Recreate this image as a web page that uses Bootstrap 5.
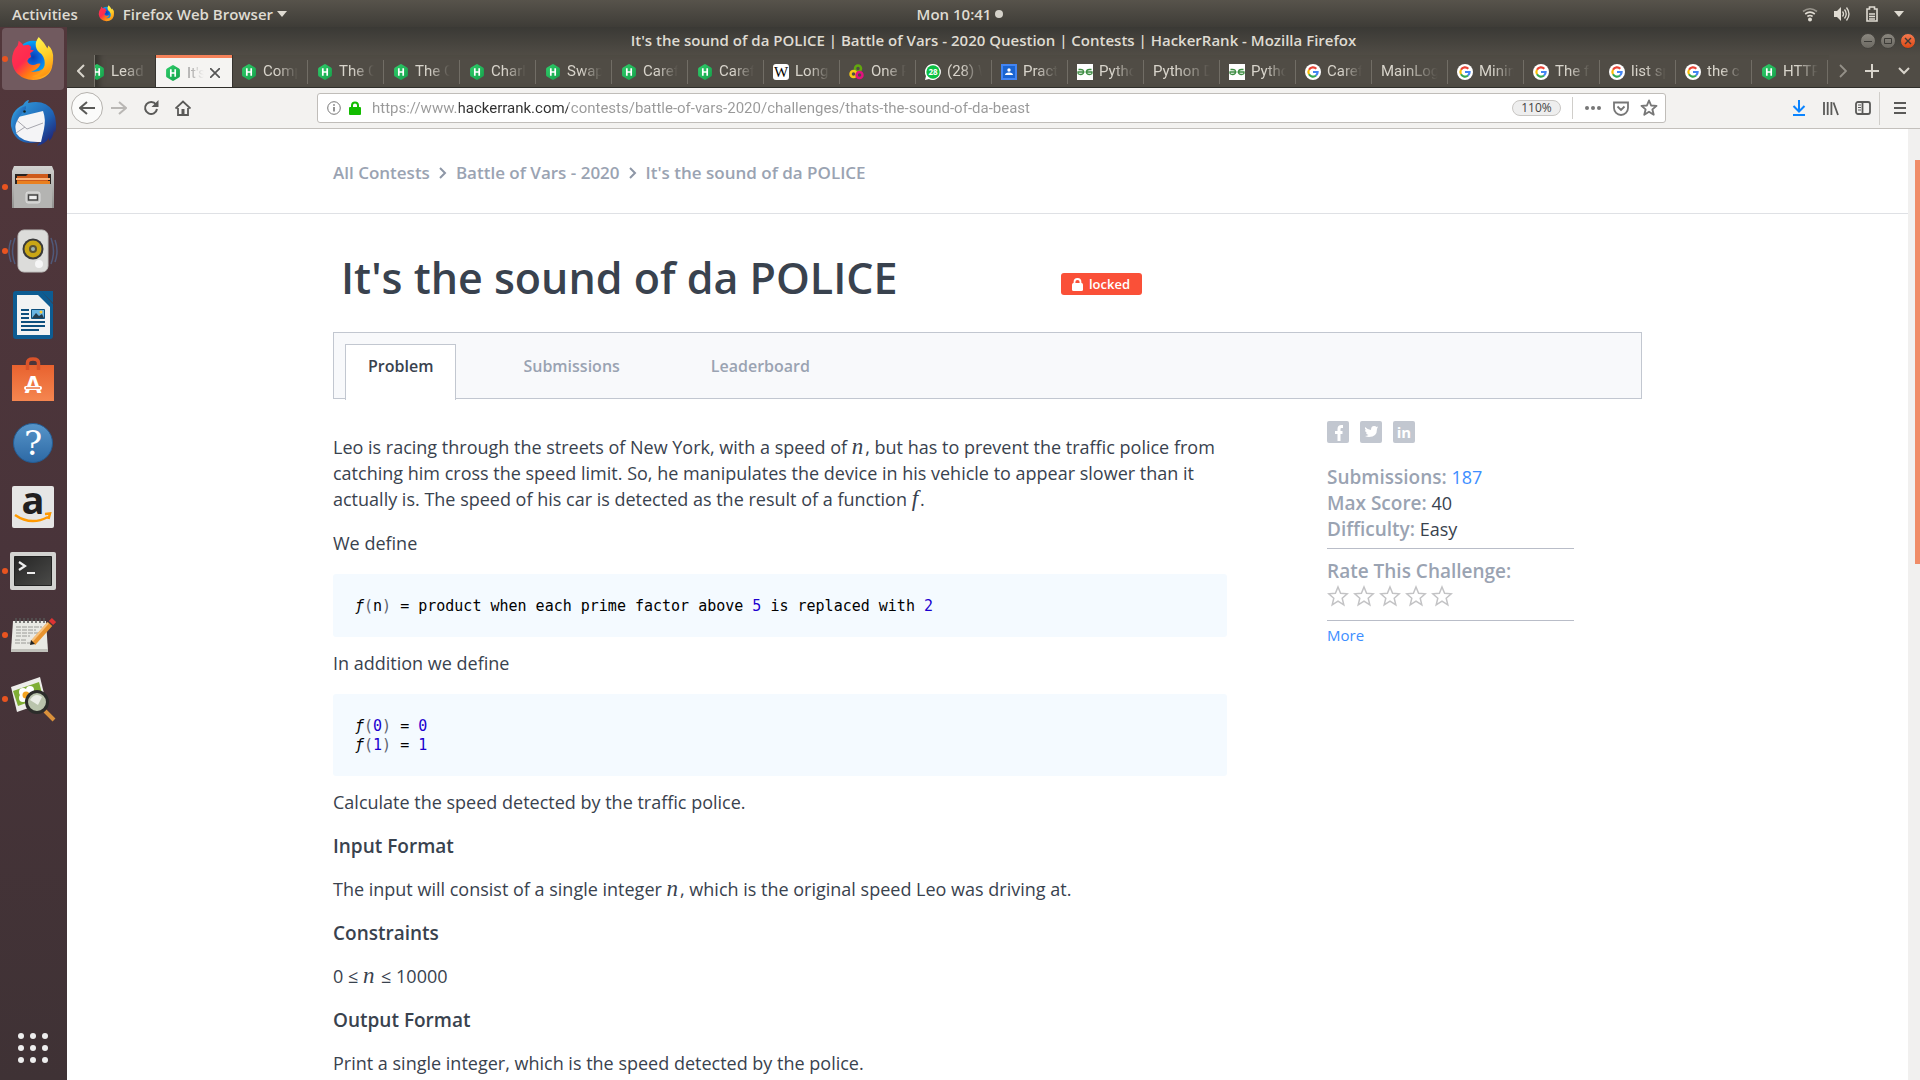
<!DOCTYPE html>
<html lang="en">
<head>
<meta charset="utf-8">
<meta name="viewport" content="width=device-width, initial-scale=1">
<title>It's the sound of da POLICE | Battle of Vars - 2020 Question | Contests | HackerRank</title>
<link href="https://cdn.jsdelivr.net/npm/bootstrap@5.3.0/dist/css/bootstrap.min.css" rel="stylesheet">
<style>
body{font-family:"Open Sans","Noto Sans",sans-serif;color:#39424e;background:#fff}
button{border:0;background:none;padding:0;color:inherit;font:inherit}
a{text-decoration:none}
svg{display:block;flex:none}
/* desktop top bar */
.topbar,.titlebar,.tabstrip,.toolbar{flex:none}
.topbar{height:27px;background:linear-gradient(#57534b,#3e3c37);color:#dfdbd2;font-size:15px;font-weight:600;line-height:26px;display:grid;grid-template-columns:1fr auto 1fr}
.topbar .dot{width:8px;height:8px;border-radius:50%;background:#d5d2ca}
/* dock */
.dock{width:67px;background:linear-gradient(#52373b,#49343a 50%,#3f3235)}
.dock-item{height:64px;width:67px;padding-right:2px;display:flex;align-items:center;justify-content:center;position:relative}
.dock-item.current::before{content:"";position:absolute;left:2px;right:3px;top:1px;bottom:1px;border-radius:4px;background:#715a5f}
.dock-item svg{position:relative}
.dock-item.running::after{content:"";position:absolute;left:2px;top:29px;width:6px;height:6px;border-radius:50%;background:#e95420}
/* window frame */
.titlebar{height:28px;background:linear-gradient(#3a3935,#504c45);color:#dfdbd2;font-size:15px;font-weight:600;line-height:27px;display:grid;grid-template-columns:1fr auto 1fr}
.win-btn{width:16px;height:16px;border-radius:50%;background:linear-gradient(#8a877f,#6c6962);color:#3c3b37;border:1px solid #45433e;display:grid;place-items:center}
.win-btn.close-win{background:linear-gradient(#f5794f,#dd4814)}
.tabstrip{height:33px;background:#504c45;color:#d8d4cb;border-bottom:1px solid #2f2e2a}
.tab-nav{width:32px;display:grid;place-items:center}
.tab-nav.edge{width:27px}
.tab-view{font-family:Roboto,"Open Sans",sans-serif;font-size:15px;border-left:1px solid #78746c;box-shadow:inset 8px 0 6px -4px #34322d}
.btab{width:76px;height:33px;flex:none;padding:0 10px 0 9px;gap:6px;display:flex;align-items:center;position:relative;color:#d8d4cb}
.btab:first-child{margin-left:-15px}
.btab::after{content:"";position:absolute;right:0;top:5px;height:24px;width:1px;background:#716d65}
.btab.no-sep::after{display:none}
.btab span{overflow:hidden;white-space:nowrap;flex:1;-webkit-mask-image:linear-gradient(90deg,#000 40%,transparent);mask-image:linear-gradient(90deg,#000 40%,transparent)}
.btab.active{background:#f5f4f2;color:#555;border-top:3px solid #f5825a;box-shadow:0 0 0 1px #35332f;padding-right:12px}
.btab.active span{-webkit-mask-image:linear-gradient(90deg,#0009,transparent);mask-image:linear-gradient(90deg,#0009,transparent)}
.toolbar{height:41px;background:#f3f2f0;border-bottom:1px solid #c3c0bc;color:#5a5a58}
.tool-btn{width:32px;height:32px;display:grid;place-items:center;flex:none}
.tool-btn.slim{width:24px}
.back{border:1px solid #b5b2ae;border-radius:50%;background:#fbfbfa}
.urlbar{height:30px;border:1px solid #c0bdb9;border-radius:3px;background:#fff;margin:0 117px 0 118px;padding:0 4px 0 9px}
.url-input{border:0;outline:0;padding:0;margin-left:11px;font-family:Roboto,"Open Sans",sans-serif;font-size:15px;min-width:0;color:transparent;background:linear-gradient(90deg,#999 87px,#2f2f2f 87px,#2f2f2f 196px,#999 196px);-webkit-background-clip:text;background-clip:text}
.zoom-pill{width:49px;height:16px;border:1px solid #c8c6c3;border-radius:8px;background:#eee;font-size:12px;line-height:14px;color:#444}
.vsep{width:1px;height:22px;background:#d0ceca}
.vsep.in-url{margin:0 8px 0 11px}
.vsep.tall{height:33px}
/* page */
.scroll-track{width:12px;background:#f1f0ef;padding-top:31px}
.scroll-thumb{width:5px;height:404px;background:#f08c67}
.page-wrap{max-width:1309px}
.crumbs{height:85px;border-bottom:1px solid #dfe1e5;font-size:17px;font-weight:600}
.crumbs a{color:#9aa3b2}
.crumb-row{padding-top:31px;line-height:26px;gap:8px}
.title-row{height:118px;padding:34px 0 0 8px}
.title-row h1{font-size:43px;font-weight:600;line-height:60px;margin:0;width:720px}
.locked{background:#fa5038;color:#fff;font-size:13px;font-weight:600;line-height:22px;border-radius:3px;padding:0 12px 0 11px;gap:6px;margin-top:25px}
.ptabs{height:67px;background:#f8f9fb;border:1px solid #c2c7d0;padding:11px 0 0 11px;font-size:16px;font-weight:600}
.ptabs a{color:#9aa3b2;line-height:22px;padding:10px 22px 0;height:56px;border:1px solid transparent;border-bottom:0}
.ptabs a.current{background:#fff;border-color:#c2c7d0;color:#39424e;margin-right:44px}
.ptabs a+a+a{margin-left:45px}
.problem{width:894px;padding-top:35px;font-size:18px;line-height:26px}
.problem p{margin:0 0 18px}
.problem h2{font-size:19px;font-weight:600;line-height:26px;margin:0 0 17px}
.problem pre{background:#f4faff;border-radius:3px;margin:0 0 13px;padding:23px 22px 21px;font:15px/19px "DejaVu Sans Mono","Liberation Mono",monospace;color:#000;overflow:hidden}
.num{color:#1c00cf}
.par{color:#5c6370}
.math{font:italic 23px/20px "Liberation Serif",serif;padding-right:2px}
.side{width:315px;padding:22px 68px 0 0;font-size:18px;line-height:26px}
.side b{font-size:19px;font-weight:600;color:#9aa3b2}
.side a{color:#3d8eff}
.side hr{margin:6px 0 9px;border-color:#b9bdc8;opacity:1}
.side .share{gap:11px;margin-bottom:21px}
.stars{gap:4px;color:#c3c3c5;padding:1px 0 7px}
.more{font-size:15px}
</style>
</head>
<body class="vh-100 d-flex flex-column overflow-hidden">
<svg width="0" height="0" class="position-absolute">
<defs>
<linearGradient id="gr" x2="1" y2="1"><stop stop-color="#2fcf6b"/><stop offset="1" stop-color="#15a04a"/></linearGradient>
<linearGradient id="fx1" x1="0" y1="0" x2="1" y2="1"><stop stop-color="#ff3750"/><stop offset=".4" stop-color="#ff2a4f"/><stop offset=".62" stop-color="#ff7a12"/><stop offset="1" stop-color="#ffcf2a"/></linearGradient>
<linearGradient id="fx2" x1=".3" y1="0" x2=".6" y2="1"><stop stop-color="#fff44f"/><stop offset=".5" stop-color="#ffd02a"/><stop offset="1" stop-color="#ff9010"/></linearGradient>
<radialGradient id="fx3"><stop stop-color="#0a3fb5"/><stop offset=".5" stop-color="#0a6be0"/><stop offset="1" stop-color="#00a8f8"/></radialGradient>
<linearGradient id="metal" x2="0" y2="1"><stop stop-color="#d2d2d0"/><stop offset="1" stop-color="#91918f"/></linearGradient>
<linearGradient id="tb" x2="1" y2="1"><stop stop-color="#36a5e4"/><stop offset=".6" stop-color="#1f63b4"/><stop offset="1" stop-color="#201063"/></linearGradient>
<linearGradient id="org" x2="0" y2="1"><stop stop-color="#e8622f"/><stop offset="1" stop-color="#f58650"/></linearGradient>
<linearGradient id="hlp" x2="0" y2="1"><stop stop-color="#5795c9"/><stop offset="1" stop-color="#2d69a5"/></linearGradient>
<linearGradient id="scr" x2="1" y2="1"><stop stop-color="#252525"/><stop offset="1" stop-color="#4b4b49"/></linearGradient>
<symbol id="hr" viewBox="0 0 16 16"><path fill="url(#gr)" d="M7 .4q1-.6 2 0l5 3q.9.6.9 1.600v6q0 1-.9 1.600l-5 3q-1 .6-2 0l-5-3Q1.100 12 1.100 11V5q0-1 .9-1.600z"/><path stroke="#fff" stroke-width="1.700" d="M5.800 4.200v7.600M10.200 4.200v7.600M5.800 8h4.400"/></symbol>
<symbol id="goog" viewBox="0 0 16 16"><circle cx="8" cy="8" r="8" fill="#fff"/><g fill="none" stroke-width="2.200"><path stroke="#ea4335" d="M4 5.700A4.600 4.600 0 0 1 11.300 4.700"/><path stroke="#fbbc05" d="M4 5.700a4.600 4.600 0 0 0 0 4.600"/><path stroke="#34a853" d="M4 10.300a4.600 4.600 0 0 0 7 1.200"/><path stroke="#4285f4" d="M8 8h4.600a4.600 4.600 0 0 1-1.600 3.500"/></g></symbol>
<symbol id="gfg" viewBox="0 0 16 16"><path fill="#fff" d="M0 0h16v16H0z"/><g fill="none" stroke="#3c8c41" stroke-width="1.300"><path d="M1.500 5.500h2q3 0 3 2.500t-3 2.500-2.500-2.500h6.500M14.500 5.500h-2q-3 0-3 2.500t3 2.500 2.500-2.500H8.500"/></g></symbol>
<symbol id="firefox" viewBox="0 0 48 48"><circle cx="24" cy="22" r="17" fill="url(#fx3)"/><path fill="url(#fx1)" d="M8 10q1-4 1-5 3 2 5 5l5-1q3 1 3 3l-1 2 4 1-4 3 1 4q-3 1-4 4 2 5 8 4 4-2 6-1-3 7-10 8 13 2 16-9 3-9-1-16 9 9 7 20-3 13-20 14Q4 44 2 26 2 16 8 10z"/><path fill="url(#fx2)" d="M30 1q-4 5-3 10 1 5 6 8 4 5 3 12-3 10-13 11 20 4 22-17 1-10-5-15l-1 3q-3-6-9-12z"/></symbol>
<symbol id="star" viewBox="0 0 22 22"><path fill="none" stroke="currentColor" stroke-width="1.500" d="M11 2l2.600 6.300 6.700.5-5.100 4.400 1.600 6.600L11 16.200l-5.800 3.600 1.600-6.600L1.700 8.800l6.700-.5z"/></symbol>
<symbol id="bookmark" viewBox="0 0 18 18"><path fill="none" stroke="currentColor" stroke-width="1.900" stroke-linejoin="round" d="M9 1.500l2.100 5 5.400.4-4.100 3.500 1.300 5.300L9 12.800l-4.700 2.900 1.300-5.300-4.100-3.500 5.400-.4z"/></symbol>
</defs>
</svg>

<header class="topbar px-2">
  <div class="d-flex align-items-center ps-1">
    <button>Activities</button>
    <button class="d-flex align-items-center ms-3 ps-1"><svg width="17" height="17"><use href="#firefox"/></svg><span class="ms-2 me-1">Firefox Web Browser</span><svg width="10" height="6"><path fill="currentColor" d="M0 0h10L5 6z"/></svg></button>
  </div>
  <button class="d-flex align-items-center gap-1">Mon 10:41 <span class="dot"></span></button>
  <div class="d-flex align-items-center justify-content-end gap-3 pe-2">
    <svg width="16" height="16" viewBox="0 0 16 16" fill="none" stroke="#dfdbd2" stroke-width="1.600"><path opacity=".5" d="M1 5.500q7-5.500 14 0"/><path d="M3.200 8q4.800-3.800 9.600 0M5.400 10.500q2.600-2 5.200 0"/><circle cx="8" cy="13.500" r="1.200" fill="#dfdbd2"/></svg>
    <svg width="16" height="16" viewBox="0 0 16 16" fill="none" stroke="#dfdbd2" stroke-width="1.300"><path fill="#dfdbd2" stroke="none" d="M0 5h3l4-4v14l-4-4H0z"/><path d="M8.500 5.500q2 2.500 0 5M10.500 3.500q3.500 4.500 0 9M12.500 1.500q5 6.500 0 13"/></svg>
    <svg width="12" height="16" viewBox="0 0 12 16" fill="none" stroke="#dfdbd2" stroke-width="1.600"><path d="M1 3h2.500V1h5v2H11v12H1zM3 8h6M3 10.500h6M3 13h6"/></svg>
    <svg width="10" height="6"><path fill="#dfdbd2" d="M0 0h10L5 6z"/></svg>
  </div>
</header>

<div class="d-flex flex-grow-1 overflow-hidden">
<nav class="dock d-flex flex-column flex-shrink-0" aria-label="Dock">
  <button class="dock-item current running" aria-label="Firefox"><svg width="46" height="46"><use href="#firefox"/></svg></button>
  <button class="dock-item" aria-label="Thunderbird"><svg width="48" height="48" viewBox="0 0 48 48"><path fill="url(#tb)" d="M2 27Q1 12 14 6q3-5 6-5l-1 3q17-4 25 8 5 10 2 22l-1-3q-1 8-5 11l0-3q-4 6-12 8l3-4Q6 48 2 27z"/><path fill="#f4f4f6" d="M5 19l29-7q3 8 1 18l-3 13Q13 44 7 34z"/><path fill="none" stroke="#a6a6ae" d="M5 19l13 11 16-6M7 34l9-6"/><path fill="url(#tb)" d="M17 10q-5 4-9 12-3 6-1 12-6-10-1-19 4-7 11-8z"/><circle cx="15.500" cy="12.500" r="1.300" fill="#122"/></svg></button>
  <button class="dock-item running" aria-label="Files"><svg width="44" height="46" viewBox="0 0 44 46"><path fill="url(#metal)" d="M3 2h38l2 5v37H1V7z"/><path fill="#2a2320" d="M4 10h36v12H4z"/><path fill="#ce5a1a" d="M6 12l9 0 2-2h20v12H6z"/><path fill="#f9b27a" d="M5 14h34v2H5z"/><path fill="#e9801f" d="M6 17h33v4H6z"/><path fill="#b4b4b2" d="M3 20h38v24H3z"/><rect x="15" y="28" width="14" height="11" rx="2" fill="#c9c9c7" stroke="#dedede"/><path fill="#eee" stroke="#444" stroke-width="1.500" d="M17.500 31h9v5h-9z"/></svg></button>
  <button class="dock-item running" aria-label="Rhythmbox"><svg width="50" height="46" viewBox="0 0 50 46"><g fill="none" stroke="#50597a" stroke-width="1.500"><path d="M7 10q-5 13 0 26M3 12q-4 11 0 22M43 10q5 13 0 26M47 12q4 11 0 22"/></g><rect x="10" y="2" width="30" height="42" rx="6" fill="#dcdcda" stroke="#c0c0be"/><circle cx="25" cy="21" r="10.500" fill="#3a3a3a"/><circle cx="25" cy="21" r="8.500" fill="#c9a616"/><circle cx="25" cy="21" r="4" fill="#5a5236"/><circle cx="25" cy="21" r="2" fill="#9eb4b0"/><circle cx="31" cy="36" r="4" fill="#f6f6f6"/></svg></button>
  <button class="dock-item" aria-label="LibreOffice Writer"><svg width="40" height="48" viewBox="0 0 40 48"><path fill="#0d5c92" d="M3 0h25l12 13v32q0 3-3 3H3q-3 0-3-3V3q0-3 3-3zM28 0h12v12z"/><path fill="#f2f3f3" d="M4 4h21l12 12v28H4z"/><g stroke="#0d4f7d" stroke-width="2"><path d="M8 19h8M8 23h8M8 27h8M8 31h24M8 35h24M8 39h18"/></g><path fill="#69b5e3" stroke="#0d4f7d" d="M18.500 18.500h13v9h-13z"/><path fill="#243c4d" d="M19 27l4-5 3 3 3-2 2 4z"/><circle cx="28" cy="21" r="1.500" fill="#fc3"/></svg></button>
  <button class="dock-item" aria-label="Ubuntu Software"><svg width="42" height="44" viewBox="0 0 42 44"><path fill="url(#org)" d="M0 8h42v36H0z"/><path fill="none" stroke="#d9532a" stroke-width="3.500" d="M15.500 13V6q0-4 5.500-4t5.500 4v7"/><text x="21" y="36" text-anchor="middle" font-family="Open Sans" font-size="24" font-weight="700" fill="#fff">A</text><path stroke="#fff" stroke-width="4" stroke-linecap="round" d="M14 31h14"/><path stroke="#ee7440" stroke-width="1.500" d="M14 31h14"/></svg></button>
  <button class="dock-item" aria-label="Help"><svg width="40" height="40" viewBox="0 0 40 40"><circle cx="20" cy="20" r="19.500" fill="url(#hlp)" stroke="#245c93"/><text x="20" y="32" text-anchor="middle" font-family="DejaVu Serif" font-size="34" fill="#fff">?</text></svg></button>
  <button class="dock-item" aria-label="Amazon"><svg width="42" height="42" viewBox="0 0 42 42"><rect width="42" height="42" rx="2" fill="#e6e6e5"/><text x="21" y="28" text-anchor="middle" font-family="Open Sans" font-size="38" font-weight="700" fill="#221f1f">a</text><path fill="none" stroke="#f90" stroke-width="2.500" d="M3 29q16 11 33 2M33 28l5-.5-1.500 5.500"/></svg></button>
  <button class="dock-item running" aria-label="Terminal"><svg width="46" height="38" viewBox="0 0 46 38"><rect width="46" height="38" rx="2" fill="#d3d3d1"/><path fill="url(#scr)" stroke="#222" d="M4.500 4.500h37v29h-37z"/><path fill="none" stroke="#eee" stroke-width="2.200" d="M9 10l6 4-6 4M17 21h8"/></svg></button>
  <button class="dock-item running" aria-label="Text Editor"><svg width="46" height="38" viewBox="0 0 46 38"><path fill="#e9e9e4" d="M3 5h33l2 30H1z"/><path fill="#c1c1bb" d="M1 33h37v3H1z"/><g stroke="#555" stroke-width="1.500"><path d="M6 2v5M10 2v5M14 2v5M18 2v5M22 2v5M26 2v5M30 2v5M34 2v5"/></g><g stroke="#9a9a96" stroke-dasharray="5 1"><path d="M6 11h26M6 14h20M6 17h24M6 20h14M5 24h12M5 27h16"/></g><path stroke="#e8932e" stroke-width="6" d="M23 27L40 8"/><path stroke="#f6c280" stroke-width="2" d="M22 25L38 7"/><path stroke="#d33" stroke-width="6" d="M41 7l3-3"/><path fill="#222" d="M20 29l1-5 4 4z"/></svg></button>
  <button class="dock-item running" aria-label="Image Viewer"><svg width="46" height="46" viewBox="0 0 46 46"><path fill="#ededea" d="M1 11L30 1l6 25L7 36z"/><path fill="#7fae35" d="M3 15l26-9 4 15L8 30z"/><g fill="#fff"><circle cx="13" cy="16" r="4"/><circle cx="20" cy="14" r="4"/><circle cx="13" cy="22" r="4"/><circle cx="20" cy="23" r="4"/></g><circle cx="16" cy="19" r="3.500" fill="#f4a321"/><path stroke="#d9913b" stroke-width="4" d="M35 35l9 9"/><circle cx="27" cy="26" r="10.500" fill="#b9c4ac" stroke="#2c2d2b" stroke-width="3"/><path fill="#fff" opacity=".7" d="M20 24q5-8 12-3l-4 8z"/></svg></button>
  <button class="dock-item mt-auto" aria-label="Show Applications"><svg width="32" height="32" viewBox="0 0 32 32" fill="#eee"><circle cx="4" cy="4" r="3"/><circle cx="16" cy="4" r="3"/><circle cx="28" cy="4" r="3"/><circle cx="4" cy="16" r="3"/><circle cx="16" cy="16" r="3"/><circle cx="28" cy="16" r="3"/><circle cx="4" cy="28" r="3"/><circle cx="16" cy="28" r="3"/><circle cx="28" cy="28" r="3"/></svg></button>
</nav>

<div class="d-flex flex-column flex-grow-1 overflow-hidden">
  <div class="titlebar">
    <span></span><span>It's the sound of da POLICE | Battle of Vars - 2020 Question | Contests | HackerRank - Mozilla Firefox</span>
    <div class="d-flex align-items-center justify-content-end gap-1 pe-1">
      <button class="win-btn" aria-label="Minimize"><svg width="8" height="8"><path stroke="currentColor" d="M0 4.500h8"/></svg></button>
      <button class="win-btn" aria-label="Maximize"><svg width="8" height="8"><path fill="none" stroke="currentColor" d="M.5 1.500h7v5h-7z"/></svg></button>
      <button class="win-btn close-win" aria-label="Close"><svg width="8" height="8"><path stroke="currentColor" stroke-width="1.400" d="M1 1l6 6M7 1L1 7"/></svg></button>
    </div>
  </div>
  <div class="tabstrip d-flex">
    <button class="tab-nav edge" aria-label="Scroll tabs left"><svg width="8" height="14"><path fill="none" stroke="currentColor" stroke-width="2" d="M7 1L1 7l6 6"/></svg></button>
    <div class="tab-view d-flex flex-grow-1 overflow-hidden">
      <a class="btab no-sep" href="#"><svg width="16" height="16"><use href="#hr"/></svg><span>Lead</span></a>
      <a class="btab active no-sep" href="#"><svg width="16" height="16"><use href="#hr"/></svg><span>It's</span><svg width="10" height="10"><path stroke="#555" stroke-width="1.700" d="M0 0l10 10M10 0L0 10"/></svg></a>
      <a class="btab" href="#"><svg width="16" height="16"><use href="#hr"/></svg><span>Comp</span></a>
      <a class="btab" href="#"><svg width="16" height="16"><use href="#hr"/></svg><span>The C</span></a>
      <a class="btab" href="#"><svg width="16" height="16"><use href="#hr"/></svg><span>The C</span></a>
      <a class="btab" href="#"><svg width="16" height="16"><use href="#hr"/></svg><span>Charl</span></a>
      <a class="btab" href="#"><svg width="16" height="16"><use href="#hr"/></svg><span>Swap</span></a>
      <a class="btab" href="#"><svg width="16" height="16"><use href="#hr"/></svg><span>Caref</span></a>
      <a class="btab" href="#"><svg width="16" height="16"><use href="#hr"/></svg><span>Caref</span></a>
      <a class="btab" href="#"><svg width="16" height="16" viewBox="0 0 16 16"><rect width="16" height="16" rx="3" fill="#fff"/><text x="8" y="13" text-anchor="middle" font-family="Liberation Serif" font-size="15">W</text></svg><span>Long</span></a>
      <a class="btab" href="#"><svg width="16" height="16" viewBox="0 0 16 16" fill="none" stroke-width="2.500"><circle cx="9" cy="4.500" r="3" stroke="#62a70f"/><circle cx="4.500" cy="10" r="3" stroke="#f6c915"/><circle cx="10.500" cy="11" r="3" stroke="#e3127e"/></svg><span>One P</span></a>
      <a class="btab" href="#"><svg width="16" height="16" viewBox="0 0 16 16"><path fill="#fff" d="M8 0a8 8 0 1 1-4 15l-4 1 1-4A8 8 0 0 1 8 0z"/><circle cx="8" cy="8" r="6.700" fill="#0bc143"/><text x="8" y="11" text-anchor="middle" font-family="Open Sans" font-size="8" font-weight="700" fill="#fff">28</text></svg><span>(28) W</span></a>
      <a class="btab" href="#"><svg width="16" height="16" viewBox="0 0 16 16"><path fill="#4285f4" d="M0 0h16v16H0z"/><path fill="#1a64d0" d="M2 2h12v12H2z"/><circle cx="8" cy="6" r="1.700" fill="#fff"/><path fill="#fff" d="M4 11q0-2.500 4-2.500t4 2.500z"/></svg><span>Pract</span></a>
      <a class="btab" href="#"><svg width="16" height="16"><use href="#gfg"/></svg><span>Pytho</span></a>
      <a class="btab" href="#"><span>Python D</span></a>
      <a class="btab" href="#"><svg width="16" height="16"><use href="#gfg"/></svg><span>Pytho</span></a>
      <a class="btab" href="#"><svg width="16" height="16"><use href="#goog"/></svg><span>Caref</span></a>
      <a class="btab" href="#"><span>MainLog</span></a>
      <a class="btab" href="#"><svg width="16" height="16"><use href="#goog"/></svg><span>Minin</span></a>
      <a class="btab" href="#"><svg width="16" height="16"><use href="#goog"/></svg><span>The f</span></a>
      <a class="btab" href="#"><svg width="16" height="16"><use href="#goog"/></svg><span>list sp</span></a>
      <a class="btab" href="#"><svg width="16" height="16"><use href="#goog"/></svg><span>the c</span></a>
      <a class="btab" href="#"><svg width="16" height="16"><use href="#hr"/></svg><span>HTTP</span></a>
    </div>
    <button class="tab-nav edge" aria-label="Scroll tabs right"><svg width="8" height="14" opacity=".5"><path fill="none" stroke="currentColor" stroke-width="1.800" d="M1 1l6 6-6 6"/></svg></button>
    <button class="tab-nav" aria-label="New tab"><svg width="14" height="14"><path stroke="currentColor" stroke-width="2" d="M7 0v14M0 7h14"/></svg></button>
    <button class="tab-nav" aria-label="List all tabs"><svg width="12" height="8"><path fill="none" stroke="currentColor" stroke-width="2" d="M1 1l5 5 5-5"/></svg></button>
  </div>
  <div class="toolbar d-flex align-items-center px-1">
    <button class="tool-btn back" aria-label="Back"><svg width="16" height="14" fill="none" stroke="currentColor" stroke-width="2"><path d="M16 7H1M8 1L1 7l7 6"/></svg></button>
    <button class="tool-btn" aria-label="Forward"><svg width="16" height="14" fill="none" stroke="#b9b7b4" stroke-width="2"><path d="M0 7h15M8 1l7 6-7 6"/></svg></button>
    <button class="tool-btn" aria-label="Reload"><svg width="16" height="16" fill="none" stroke="currentColor" stroke-width="2"><path d="M13 4.500A6 6 0 1 0 14 9"/><path fill="currentColor" stroke="none" d="M15.500 0v7H8.500z"/></svg></button>
    <button class="tool-btn" aria-label="Home"><svg width="16" height="16" fill="none" stroke="currentColor" stroke-width="1.800"><path d="M.5 8.500L8 1.500l7.500 7M3 8v7h10V8"/><path fill="currentColor" stroke="none" d="M6.500 9h3v6h-3z"/></svg></button>
    <div class="urlbar d-flex align-items-center flex-grow-1">
      <svg width="14" height="14" fill="none" stroke="#777"><circle cx="7" cy="7" r="6.300"/><path stroke-width="1.600" d="M7 6v4.500M7 3.300v1.500"/></svg>
      <svg class="ms-2" width="12" height="14"><path fill="none" stroke="#12bc00" stroke-width="2" d="M3 7V4.500a3 3 0 0 1 6 0V7"/><rect y="6" width="12" height="8" rx="1" fill="#12bc00"/></svg>
      <input class="url-input flex-grow-1" aria-label="Address" value="https://www.hackerrank.com/contests/battle-of-vars-2020/challenges/thats-the-sound-of-da-beast">
      <button class="zoom-pill">110%</button>
      <span class="vsep in-url"></span>
      <button class="tool-btn slim" aria-label="Page actions"><svg width="16" height="4" fill="#777"><circle cx="2" cy="2" r="2"/><circle cx="8" cy="2" r="2"/><circle cx="14" cy="2" r="2"/></svg></button>
      <button class="tool-btn" aria-label="Save to Pocket"><svg width="16" height="15" fill="none" stroke="#777" stroke-width="1.800"><path d="M1 1.500h14V7a7 7 0 0 1-14 0zM4.500 5.500L8 9l3.500-3.500"/></svg></button>
      <button class="tool-btn slim" aria-label="Bookmark"><svg width="18" height="18" color="#777"><use href="#bookmark"/></svg></button>
    </div>
    <button class="tool-btn" aria-label="Downloads"><svg width="14" height="16" fill="none" stroke="#0a84ff" stroke-width="2"><path d="M7 0v11M1.500 6L7 11.500 12.500 6M1 15h12"/></svg></button>
    <button class="tool-btn" aria-label="Library"><svg width="16" height="15" fill="none" stroke="currentColor" stroke-width="1.800"><path d="M1 1v13M4.700 1v13M8.400 1v13M10.500 1.500L15 14"/></svg></button>
    <button class="tool-btn" aria-label="Sidebars"><svg width="16" height="14" fill="none" stroke="currentColor" stroke-width="1.800"><rect x="1" y="1" width="14" height="12" rx="2"/><path d="M7.500 1v12"/><path stroke-width="1" d="M3 4h3M3 6.500h3M3 9h3"/></svg></button>
    <span class="vsep tall me-1"></span>
    <button class="tool-btn" aria-label="Menu"><svg width="12" height="12" stroke="currentColor" stroke-width="2"><path d="M0 1h12M0 6h12M0 11h12"/></svg></button>
  </div>

  <div class="d-flex flex-grow-1 overflow-hidden">
    <main class="flex-grow-1 overflow-hidden">
      <div class="crumbs"><nav class="page-wrap mx-auto crumb-row d-flex align-items-center" aria-label="Breadcrumb">
        <a href="#">All Contests</a><svg width="10" height="12" fill="none" stroke="#8d96a6" stroke-width="2"><path d="M2 1l5 5-5 5"/></svg><a href="#">Battle of Vars - 2020</a><svg width="10" height="12" fill="none" stroke="#8d96a6" stroke-width="2"><path d="M2 1l5 5-5 5"/></svg><a href="#">It's the sound of da POLICE</a>
      </nav></div>
      <div class="page-wrap mx-auto">
        <div class="title-row d-flex align-items-start"><h1>It's the sound of da POLICE</h1><span class="locked d-flex align-items-center"><svg width="11" height="13" viewBox="0 0 11 13"><path fill="none" stroke="#fff" stroke-width="1.800" d="M2.500 6V4a3 3 0 0 1 6 0v2"/><rect y="5" width="11" height="8" rx="1.500" fill="#fff"/></svg>locked</span></div>
        <nav class="ptabs d-flex" aria-label="Challenge"><a class="current" href="#">Problem</a><a href="#">Submissions</a><a href="#">Leaderboard</a></nav>
        <div class="d-flex justify-content-between">
          <article class="problem">
            <p>Leo is racing through the streets of New York, with a speed of <i class="math">n</i>, but has to prevent the traffic police from catching him cross the speed limit. So, he manipulates the device in his vehicle to appear slower than it actually is. The speed of his car is detected as the result of a function <i class="math">f</i>.</p>
            <p>We define</p>
<pre><i>ƒ</i><span class="par">(</span>n<span class="par">)</span> = product when each prime factor above <span class="num">5</span> is replaced with <span class="num">2</span></pre>
            <p>In addition we define</p>
<pre><i>ƒ</i><span class="par">(</span><span class="num">0</span><span class="par">)</span> = <span class="num">0</span>
<i>ƒ</i><span class="par">(</span><span class="num">1</span><span class="par">)</span> = <span class="num">1</span></pre>
            <p>Calculate the speed detected by the traffic police.</p>
            <h2>Input Format</h2>
            <p>The input will consist of a single integer <i class="math">n</i>, which is the original speed Leo was driving at.</p>
            <h2>Constraints</h2>
            <p>0 ≤ <i class="math">n</i> ≤ 10000</p>
            <h2>Output Format</h2>
            <p>Print a single integer, which is the speed detected by the police.</p>
          </article>
          <aside class="side">
            <div class="share d-flex">
              <a href="#" aria-label="Facebook"><svg width="22" height="22"><rect width="22" height="22" rx="2" fill="#c2c7d0"/><path fill="none" stroke="#fff" stroke-width="3" d="M16 5.500h-1.500q-2.500 0-2.500 2.500v12M8 11.500h7.500"/></svg></a>
              <a href="#" aria-label="Twitter"><svg width="22" height="22"><rect width="22" height="22" rx="2" fill="#c2c7d0"/><path fill="#fff" d="M5 6q3 3 6 3 0-4 3-4 2 0 2.500 1L18 5.500 17 8q0 8-8 8-2 0-4-1 2 0 3.500-1-2-.5-2.500-2h1Q5 11 5 9l1 .3Q4.500 8 5 6z"/></svg></a>
              <a href="#" aria-label="LinkedIn"><svg width="22" height="22"><rect width="22" height="22" rx="2" fill="#c2c7d0"/><text x="11" y="17" text-anchor="middle" font-family="Open Sans" font-size="15" font-weight="700" fill="#fff">in</text></svg></a>
            </div>
            <div><b>Submissions:</b> <a href="#">187</a></div>
            <div><b>Max Score:</b> 40</div>
            <div><b>Difficulty:</b> Easy</div>
            <hr>
            <b>Rate This Challenge:</b>
            <div class="stars d-flex">
              <svg width="22" height="22"><use href="#star"/></svg><svg width="22" height="22"><use href="#star"/></svg><svg width="22" height="22"><use href="#star"/></svg><svg width="22" height="22"><use href="#star"/></svg><svg width="22" height="22"><use href="#star"/></svg>
            </div>
            <hr class="mb-0">
            <a class="more" href="#">More</a>
          </aside>
        </div>
      </div>
    </main>
    <div class="scroll-track d-flex justify-content-end flex-shrink-0"><div class="scroll-thumb"></div></div>
  </div>
</div>
</div>
<script src="https://cdn.jsdelivr.net/npm/bootstrap@5.3.0/dist/js/bootstrap.bundle.min.js"></script>
</body>
</html>
